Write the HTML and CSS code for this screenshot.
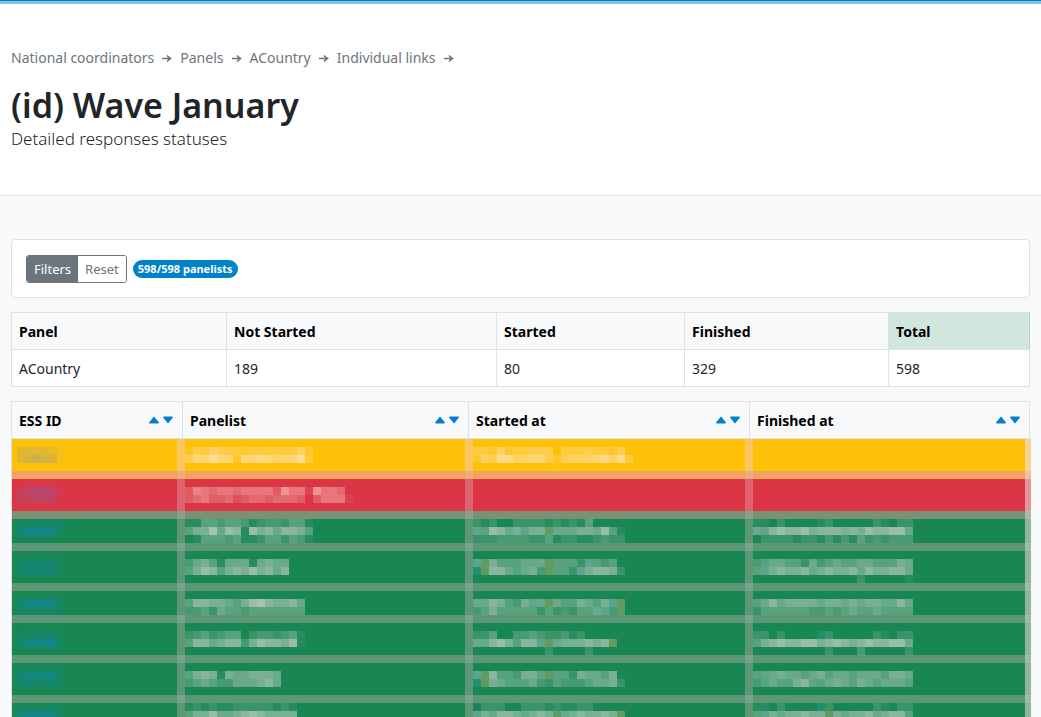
FILE: index.html
```html
<!DOCTYPE html>
<html lang="en">
<head>
<meta charset="utf-8">
<meta name="viewport" content="width=device-width, initial-scale=1">
<title>(id) Wave January</title>
<link rel="stylesheet" href="styles.css">
</head>
<body>
<svg class="sprite" aria-hidden="true">
  <symbol id="arrow" viewBox="0 0 12 10"><path d="M1 5.500h8.500M6 2.500l3 3-3 3" fill="none" stroke="currentColor" stroke-width="1.600"/><path d="M7.500 3.500 11 5.500 7.500 7.500Z" fill="currentColor"/></symbol>
  <symbol id="up" viewBox="0 0 12 8"><path d="M6 .5 11 6.500Q11 7.500 10 7.500H2Q1 7.500 1 6.500Z" fill="currentColor"/></symbol>
  <symbol id="down" viewBox="0 0 12 8"><path d="M6 7.500 1 1.500Q1 .5 2 .5H10Q11 .5 11 1.500Z" fill="currentColor"/></symbol>
</svg>
<header class="page-header">
  <nav class="crumbs" aria-label="Breadcrumb">
    <a href="#">National coordinators</a><svg><use href="#arrow"/></svg>
    <a href="#">Panels</a><svg><use href="#arrow"/></svg>
    <a href="#">ACountry</a><svg><use href="#arrow"/></svg>
    <a href="#">Individual links</a><svg><use href="#arrow"/></svg>
  </nav>
  <h1 class="title">(id) Wave January</h1>
  <p class="subtitle">Detailed responses statuses</p>
</header>
<main class="content">
  <section class="toolbar">
    <div class="button-group">
      <button class="button button-solid" type="button">Filters</button><button class="button" type="button">Reset</button>
    </div>
    <span class="badge">598/598 panelists</span>
  </section>
  <table class="table summary">
    <colgroup><col class="s1"><col class="s2"><col class="s3"><col class="s4"><col></colgroup>
    <thead><tr><th>Panel</th><th>Not Started</th><th>Started</th><th>Finished</th><th class="total">Total</th></tr></thead>
    <tbody><tr><td>ACountry</td><td>189</td><td>80</td><td>329</td><td>598</td></tr></tbody>
  </table>
  <table class="table panelists">
    <colgroup><col class="p1"><col class="p2"><col class="p3"><col></colgroup>
    <thead><tr>
      <th><div class="head">ESS ID<span class="sort"><button type="button" aria-label="Sort ESS ID ascending"><svg><use href="#up"/></svg></button><button type="button" aria-label="Sort ESS ID descending"><svg><use href="#down"/></svg></button></span></div></th>
      <th><div class="head">Panelist<span class="sort"><button type="button" aria-label="Sort Panelist ascending"><svg><use href="#up"/></svg></button><button type="button" aria-label="Sort Panelist descending"><svg><use href="#down"/></svg></button></span></div></th>
      <th><div class="head">Started at<span class="sort"><button type="button" aria-label="Sort Started at ascending"><svg><use href="#up"/></svg></button><button type="button" aria-label="Sort Started at descending"><svg><use href="#down"/></svg></button></span></div></th>
      <th><div class="head">Finished at<span class="sort"><button type="button" aria-label="Sort Finished at ascending"><svg><use href="#up"/></svg></button><button type="button" aria-label="Sort Finished at descending"><svg><use href="#down"/></svg></button></span></div></th>
    </tr></thead>
    <tbody id="rows"></tbody>
  </table>
</main>
<script src="mosaic.js"></script>
</body>
</html>
```
FILE: styles.css
```css
* { box-sizing: border-box; }
body {
  margin: 0;
  background: #f8f9fb;
  color: #212529;
  font: 14px/22px "Noto Sans", "Open Sans", sans-serif;
}
.sprite { display: none; }
.page-header {
  padding: 43px 11px 45px;
  background: #fff;
  border-top: 1px solid #0082c8;
  border-bottom: 1px solid #dee2e6;
  box-shadow: inset 0 3px #7fc0e4;
}
.crumbs { display: flex; align-items: center; gap: 7px; color: #6c757d; line-height: 28px; }
.crumbs a { color: inherit; text-decoration: none; }
.crumbs svg { width: 12px; height: 10px; }
.title { margin: 11px 0 0; font-size: 34px; font-weight: 600; line-height: 44px; }
.subtitle { margin: 0; font-size: 17px; font-weight: 300; line-height: 23px; }
.content { display: flex; flex-direction: column; gap: 14px; padding: 43px 11px 0; }
.toolbar {
  display: flex;
  align-items: center;
  gap: 6px;
  padding: 15px 14px 14px;
  background: #fff;
  border: 1px solid #dee2e6;
  border-radius: 4px;
}
.button-group { display: flex; border: 1px solid #6c757d; border-radius: 3px; overflow: hidden; }
.button {
  padding: 0 7px;
  border: 0;
  background: #fff;
  color: #6c757d;
  font: 13px/26px "Noto Sans", sans-serif;
}
.button-solid { background: #6c757d; color: #fff; }
.badge {
  padding: 0 5px;
  border-radius: 9px;
  background: #0082c8;
  color: #fff;
  font-size: 11px;
  font-weight: 700;
  line-height: 18px;
}
.table { width: 100%; table-layout: fixed; border-spacing: 0; }
.table th {
  height: 37px;
  padding: 1px 7px 0;
  border: solid #dee2e6;
  border-width: 1px 0 0 1px;
  color: #000;
  text-align: left;
  line-height: 35px;
}
.table th:last-child { border-right-width: 1px; }
.summary td { height: 38px; padding: 2px 7px 0; background: #fff; border: 1px solid #dee2e6; border-right: 0; }
.summary td:last-child { border-right: 1px solid #dee2e6; }
.summary .total { background: #d1e7dd; border-right-color: #bcd0c7; }
.s1 { width: 21.1%; }
.s2 { width: 26.5%; }
.s3 { width: 18.450%; }
.s4 { width: 20.020%; }
.p1 { width: 16.780%; }
.p2 { width: 28.070%; }
.p3 { width: 27.580%; }
.panelists th { height: 38px; border-bottom-width: 1px; }
.head { display: flex; justify-content: space-between; align-items: center; }
.sort { display: flex; gap: 2px; margin-right: 1px; padding-bottom: 2px; }
.sort button { display: flex; padding: 0; border: 0; background: none; color: #0082c8; }
.sort svg { width: 12px; height: 8px; }
.panelists td {
  position: relative;
  padding: 0 0 8px;
  background: linear-gradient(var(--line), var(--line)) bottom / 100% 8px no-repeat var(--fill);
  background-clip: padding-box;
}
.panelists td:first-child { padding-left: 5px; border-left: 1px solid #dee2e6; }
.panelists td:nth-child(2) { padding-left: 3px; --shift: -5px; }
.panelists td:nth-child(3) { padding-left: 5px; --shift: -3px; }
.panelists td:nth-child(4) { padding-left: 4px; --shift: -4px; }
.panelists td:not(:first-child)::before,
.panelists td:last-child::after {
  content: "";
  position: absolute;
  top: 0;
  bottom: 0;
  left: var(--shift);
  width: 8px;
  background: var(--seam);
  border-bottom: 8px solid var(--cross);
}
.panelists td:last-child::after {
  left: auto;
  right: -1px;
  width: 6px;
  background: var(--edge);
  border-bottom-color: var(--corner);
}
.mosaic { display: block; }
.started { --fill: #ffc107; --line: #eea563; --seam: #fcc75f; --cross: #ecad7c; --edge: #fad291; --corner: #efc1a4; --tone: #ffeffa; --id: #7896c8; }
.pending { --fill: #dc3545; --line: #799276; --seam: #de646f; --cross: #8a9f8a; --edge: #e3959c; --corner: #a9b8ab; --tone: #fae6d7; --id: #8068b8; }
.finished { --fill: #198754; --line: #5c9876; --seam: #5c9876; --cross: #76a38d; --edge: #92b3a0; --corner: #a0b9a8; --tone: #f0e1e1; --id: #0a85c0; }
.tone { fill: var(--tone); }
.panelists td:first-child .tone { fill: var(--id); }
.olive { fill: #629a62; }
.teal { fill: #5fa58d; }
.jade { fill: #20906e; }
```
FILE: mosaic.js
```js
// Each cell lists its lines of 8px blocks. Digits give the strength of the
// row's light tone; o, t and k are the olive, teal and jade blocks.
const BLOCK = 8;
const rows = [
  ["started", 4, ["", "333321", "345441"],
    ["", "1435433233333352", "4668662667656683"],
    ["", "3325233444033343324", "25477556642455567573", "00000000001"], []],
  ["pending", 4, ["", "345541", "334431"],
    ["", "36545545555375517554", "345334234434443035551"], [], []],
  ["finished", 3, ["111121", "467761", "111100"],
    ["1144344312332441", "4669587186757764", "0144434112442431"],
    ["212002222121214", "t48756t66o555665841", "2223333224122112322"],
    ["11020000120000021022", "5t787786777676877885", "02222122131314232333"]],
  ["finished", 4, ["", "333331", "344441"],
    ["", "3564155515655", "4687467686757"],
    ["", "to6444555o4442t434", "ko7754563o442t67762"],
    ["", "34554425345445544465", "4t676675676675766775", "00000000000002000001"]],
  ["finished", 3, ["", "467661", "222221"],
    ["", "477665468976675", "334254434444444"],
    ["", "5576436t5o5446546to", "3464444424232445t3o"],
    ["", "45756666566565665575", "24444443343454454444"]],
  ["finished", 4, ["", "122221", "457671"],
    ["", "234234402332341", "477567736877681"],
    ["", "22400334322312", "55786477to5666767o", "000000000200002"],
    ["", "22020000k20000021022", "46787788678767877885", "00000000020003000002"]],
  ["finished", 4, ["", "455561", "333331"],
    ["", "467616556665", "345433555675"],
    ["", "to744366to44265546", "ko65444532433345562"],
    ["", "4t565545645545554665", "3454467t456546545554"]],
  ["finished", 4, ["111121", "577661"],
    ["12121122222121", "46685567876666"],
    ["0222002221211220", "t657765676o5676676o"],
    ["11020000k20000021022", "4t6566766o6566756774"]]
];
const hues = { o: "olive", t: "teal", k: "jade" };

function draw(lines, height) {
  const columns = Math.max(0, ...lines.map(line => line.length));
  let blocks = "";
  lines.forEach((line, y) => [...line].forEach((mark, x) => {
    if (mark === "0") return;
    const hue = hues[mark] || "tone";
    const strength = hues[mark] ? 1 : mark * 0.075;
    blocks += `<rect class="${hue}" x="${x * BLOCK}" y="${y * BLOCK}" width="8" height="8" fill-opacity="${strength.toFixed(2)}"/>`;
  }));
  return `<svg class="mosaic" aria-hidden="true" shape-rendering="crispEdges" width="${columns * BLOCK}" height="${height * BLOCK}">${blocks}</svg>`;
}

document.getElementById("rows").innerHTML = rows.map(([status, height, ...cells]) =>
  `<tr class="${status}">${cells.map(lines => `<td>${draw(lines, height)}</td>`).join("")}</tr>`
).join("");
```
